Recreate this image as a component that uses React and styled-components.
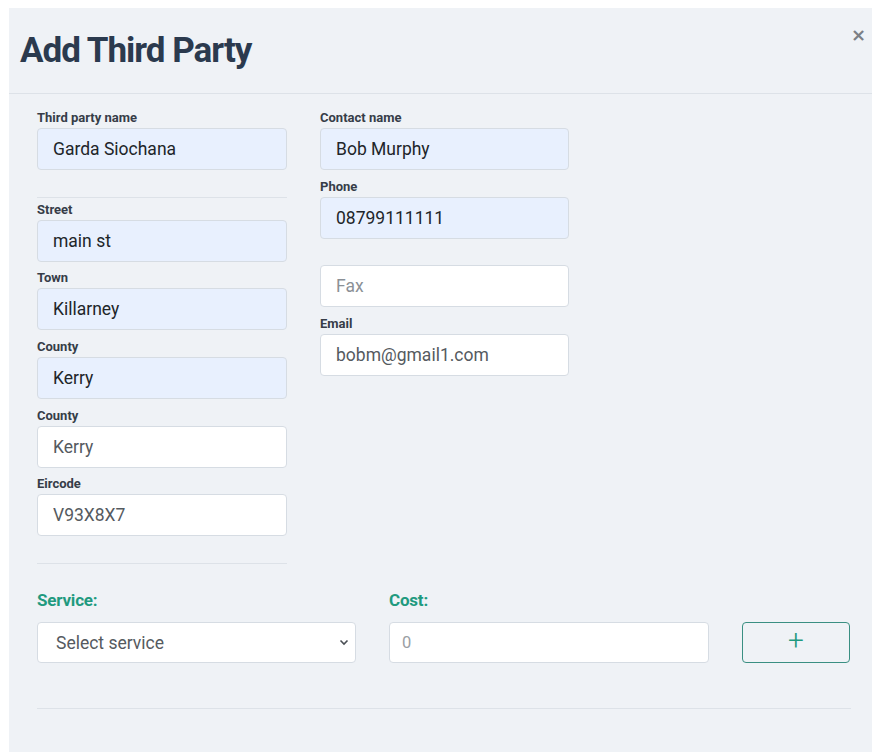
import React from 'react';
import styled, { createGlobalStyle } from 'styled-components';

const GlobalStyle = createGlobalStyle`
  body {
    margin: 0;
    background: #ffffff;
    font-family: Roboto, "Liberation Sans", sans-serif;
  }
  #root {
    padding: 8px 0 0 9px;
  }
`;

const Colors = {
  panel: '#eff2f6',
  outline: '#d6dce3',
  divider: '#dde2e8',
  title: '#2b3a4e',
  label: '#363d48',
  text: '#212529',
  muted: '#6b7078',
  filled: '#e8f0fe',
  accent: '#1f9a7f',
};

const Modal = styled.div`
  background: ${Colors.panel};
  min-height: 744px;
`;

const ModalHeader = styled.div`
  height: 85px;
  padding: 0 6px 0 11px;
  border-bottom: 1px solid ${Colors.divider};
  display: flex;
  justify-content: space-between;
  align-items: flex-start;
`;

const Title = styled.h2`
  margin: 22px 0 0;
  font-size: 35px;
  font-weight: 700;
  letter-spacing: -1px;
  color: ${Colors.title};
`;

const CloseButton = styled.button`
  margin-top: 16px;
  padding: 0;
  border: 0;
  background: none;
  font-family: "DejaVu Sans", sans-serif;
  font-size: 18px;
  font-weight: 700;
  color: #7b7f85;
  cursor: pointer;
`;

const ModalBody = styled.div`
  padding: 16px 21px 0 28px;
`;

const Columns = styled.div`
  display: grid;
  grid-template-columns: 250px 249px;
  column-gap: 33px;
  align-items: start;
`;

const Column = styled.div`
  display: flex;
  flex-direction: column;
`;

const Field = styled.div`
  display: flex;
  flex-direction: column;
  margin-bottom: 8.7px;
`;

const Label = styled.label`
  height: 18px;
  font-size: 13px;
  font-weight: 700;
  line-height: 15px;
  color: ${Colors.label};
`;

const Input = styled.input`
  box-sizing: border-box;
  height: 42px;
  width: 100%;
  padding: 0 15px;
  border: 1px solid ${Colors.outline};
  border-radius: 4px;
  background: ${p => (p.$filled ? Colors.filled : '#ffffff')};
  font-family: Roboto, "Liberation Sans", sans-serif;
  font-size: 17.5px;
  color: ${p => (p.$filled ? Colors.text : '#555a60')};
  outline: none;

  &::placeholder {
    color: #8b9096;
  }
`;

const Divider = styled.hr`
  border: 0;
  border-top: 1px solid ${Colors.divider};
  margin: ${p => p.$margin || '18px 0 4px'};
`;

const ServiceRow = styled.div`
  display: grid;
  grid-template-columns: 319px 320px 108px;
  column-gap: 33px;
  align-items: end;
  margin-top: 26px;
`;

const ServiceLabel = styled.label`
  display: block;
  height: 32px;
  font-size: 17px;
  font-weight: 700;
  letter-spacing: -0.2px;
  color: ${Colors.accent};
`;

const SelectWrap = styled.div`
  position: relative;
`;

const Select = styled.select`
  box-sizing: border-box;
  width: 100%;
  height: 41px;
  padding: 0 30px 0 18px;
  border: 1px solid ${Colors.outline};
  border-radius: 4px;
  background: #ffffff;
  appearance: none;
  font-family: Roboto, "Liberation Sans", sans-serif;
  font-size: 17.5px;
  color: #555a60;
`;

const Chevron = styled.svg`
  position: absolute;
  right: 7px;
  top: 17px;
  pointer-events: none;
`;

const CostInput = styled(Input)`
  height: 41px;
  padding: 0 12px;
  font-size: 16.5px;

  &::placeholder {
    color: #9a9ea4;
  }
`;

const AddButton = styled.button`
  height: 41px;
  border: 1px solid #3a8f82;
  border-radius: 4px;
  background: transparent;
  color: ${Colors.accent};
  font-family: Roboto, "Liberation Sans", sans-serif;
  font-size: 28px;
  font-weight: 300;
  line-height: 1;
  padding: 0 0 3px;
  cursor: pointer;
`;

const FormField = ({ label, value, placeholder, filled }) => (
  <Field>
    <Label>{label}</Label>
    <Input defaultValue={value} placeholder={placeholder} $filled={filled} />
  </Field>
);

export default function App() {
  return (
    <>
      <GlobalStyle />
      <Modal>
        <ModalHeader>
          <Title>Add Third Party</Title>
          <CloseButton aria-label="Close">×</CloseButton>
        </ModalHeader>
        <ModalBody>
          <Columns>
            <Column>
              <FormField label="Third party name" value="Garda Siochana" filled />
              <Divider />
              <FormField label="Street" value="main st" filled />
              <FormField label="Town" value="Killarney" filled />
              <FormField label="County" value="Kerry" filled />
              <FormField label="County" value="Kerry" />
              <FormField label="Eircode" value="V93X8X7" />
              <Divider $margin="18px 0 0" />
            </Column>
            <Column>
              <FormField label="Contact name" value="Bob Murphy" filled />
              <FormField label="Phone" value="08799111111" filled />
              <FormField label="" placeholder="Fax" />
              <FormField label="Email" value="bobm@gmail1.com" />
            </Column>
          </Columns>
          <ServiceRow>
            <div>
              <ServiceLabel>Service:</ServiceLabel>
              <SelectWrap>
                <Select defaultValue="">
                  <option value="">Select service</option>
                </Select>
                <Chevron width="10" height="7" viewBox="0 0 10 7">
                  <path d="M1.5 1.5 L5 5 L8.5 1.5" fill="none" stroke="#4a4f55" strokeWidth="1.6" />
                </Chevron>
              </SelectWrap>
            </div>
            <div>
              <ServiceLabel>Cost:</ServiceLabel>
              <CostInput placeholder="0" />
            </div>
            <AddButton aria-label="Add service">+</AddButton>
          </ServiceRow>
          <Divider $margin="45px 0 0" />
        </ModalBody>
      </Modal>
    </>
  );
}
